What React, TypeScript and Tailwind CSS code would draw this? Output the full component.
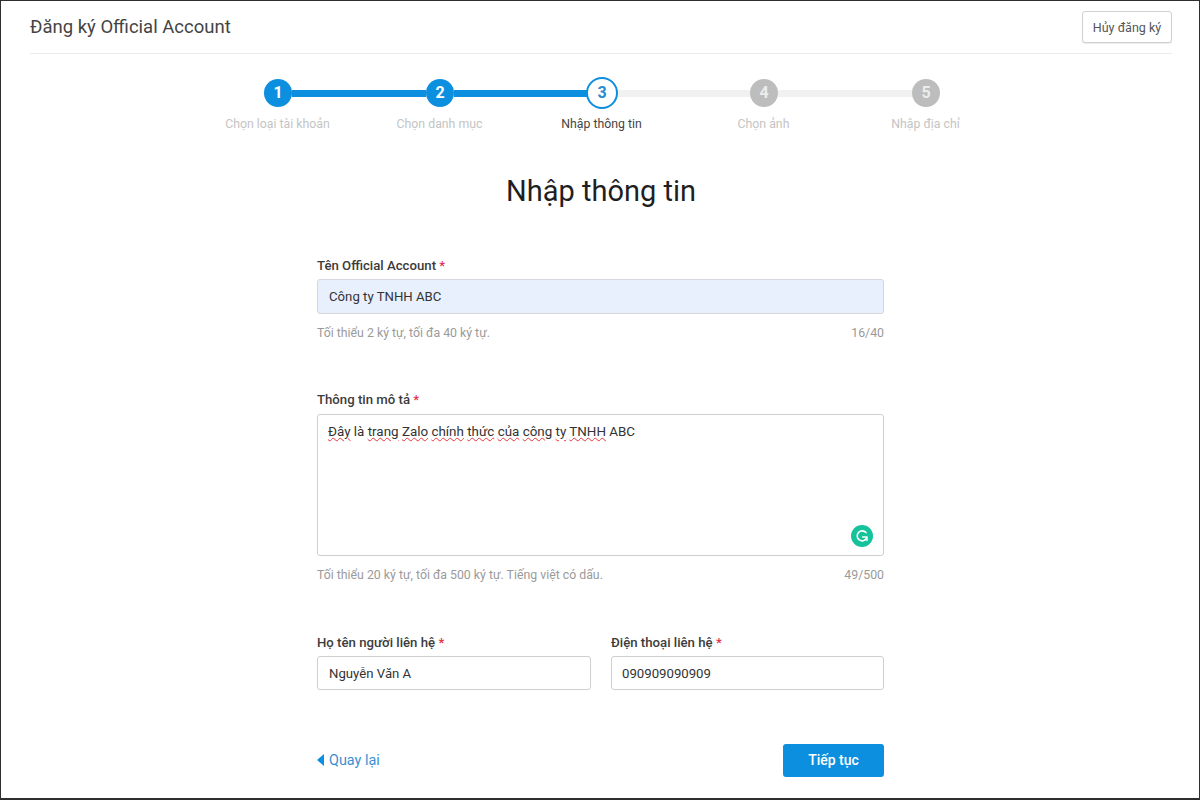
import React from 'react';

const steps = [
  { n: 1, label: 'Chọn loại tài khoản' },
  { n: 2, label: 'Chọn danh mục' },
  { n: 3, label: 'Nhập thông tin' },
  { n: 4, label: 'Chọn ảnh' },
  { n: 5, label: 'Nhập địa chỉ' },
];

function StepCircle({ n }: { n: number }) {
  if (n === 3) {
    return (
      <div className="z-10 -mx-0.5 flex h-8 w-8 shrink-0 items-center justify-center rounded-full border-2 border-[#0d8fe0] bg-white text-[16px] font-bold text-[#2a8ad0]">
        {n}
      </div>
    );
  }
  return (
    <div
      className={
        n < 3
          ? 'z-10 flex h-7 w-7 shrink-0 items-center justify-center rounded-full bg-[#0d8fe0] text-[16px] font-bold text-white'
          : 'z-10 flex h-7 w-7 shrink-0 items-center justify-center rounded-full bg-[#bdbdbd] text-[16px] font-bold text-[#ececec]'
      }
    >
      {n}
    </div>
  );
}

function Label({ text }: { text: string }) {
  return (
    <label className="block text-[13.2px] leading-[16px] font-medium text-[#3c3c3c]">
      {text} <span className="text-[#e0334c]">*</span>
    </label>
  );
}

function Squiggle({ children }: { children: React.ReactNode }) {
  return <span className="underline decoration-wavy decoration-[#e8353b] decoration-1">{children}</span>;
}

export default function App() {
  return (
    <div
      className="h-[800px] w-[1200px] overflow-hidden border border-b-2 border-[#2e2e2e] bg-white pr-[27px] pl-[29px] text-[#333]"
      style={{ fontFamily: 'Roboto, "Liberation Sans", sans-serif' }}
    >
      <header className="flex h-[53px] items-center justify-between border-b border-[#ebebeb]">
        <h1 className="text-[18.5px] leading-[24px] font-normal text-[#444]">Đăng ký Official Account</h1>
        <button className="h-[32px] w-[90px] rounded-[3px] border border-[#d0d0d0] bg-white pt-[2px] text-[12.5px] text-[#555] shadow-[0_1px_1px_rgba(0,0,0,0.08)]">
          Hủy đăng ký
        </button>
      </header>

      <div className="mt-[23px] flex h-8 items-center justify-center pl-[2px]">
        {steps.map((s, i) => (
          <React.Fragment key={s.n}>
            <StepCircle n={s.n} />
            {i < steps.length - 1 && (
              <div className={s.n < 3 ? 'h-[7px] w-[134px] bg-[#0d8fe0]' : 'h-[7px] w-[134px] bg-[#f1f1f1]'} />
            )}
          </React.Fragment>
        ))}
      </div>

      <div className="mt-[7px] flex justify-center pl-[1px]">
        {steps.map((s) => (
          <div
            key={s.n}
            className={
              s.n === 3
                ? 'w-[162px] text-center text-[12.3px] leading-[16px] text-[#444]'
                : 'w-[162px] text-center text-[12.3px] leading-[16px] text-[#c4c4c4]'
            }
          >
            {s.label}
          </div>
        ))}
      </div>

      <h2 className="mt-[39px] text-center text-[29px] leading-[40px] font-normal text-[#1f1f1f]">Nhập thông tin</h2>

      <form className="mt-[47px] ml-[287px] w-[567px]">
        <Label text="Tên Official Account" />
        <input
          readOnly
          value="Công ty TNHH ABC"
          className="mt-[5px] block h-[35px] w-full rounded-[3px] border border-[#d4d8de] bg-[#e8f0fe] px-[11px] text-[13.2px] text-[#333] outline-none"
        />
        <div className="mt-[11px] flex justify-between text-[12.3px] leading-[16px] text-[#9a9a9a]">
          <span>Tối thiểu 2 ký tự, tối đa 40 ký tự.</span>
          <span>16/40</span>
        </div>

        <div className="mt-[51px]">
          <Label text="Thông tin mô tả" />
        </div>
        <div className="relative mt-[6px] h-[142px] w-full rounded-[3px] border border-[#cfcfcf] px-[10px] py-[8px] text-[13.4px] leading-[18px] text-[#333]">
          <Squiggle>Đây</Squiggle> là <Squiggle>trang</Squiggle> <Squiggle>Zalo</Squiggle> <Squiggle>chính</Squiggle>{' '}
          <Squiggle>thức</Squiggle> <Squiggle>của</Squiggle> <Squiggle>công</Squiggle> <Squiggle>ty</Squiggle>{' '}
          <Squiggle>TNHH</Squiggle> ABC
          <div className="absolute right-[10px] bottom-[8px] flex h-[22px] w-[22px] items-center justify-center rounded-full bg-[#15c39a]">
            <svg width="14" height="14" viewBox="0 0 14 14" fill="none">
              <path d="M11.6 9.2A5 5 0 1 1 11 3.6" stroke="white" strokeWidth="1.6" strokeLinecap="round" />
              <path d="M7.6 8h4.4v3.6" stroke="white" strokeWidth="1.4" strokeLinecap="round" strokeLinejoin="round" />
            </svg>
          </div>
        </div>
        <div className="mt-[11px] flex justify-between text-[12.3px] leading-[16px] text-[#9a9a9a]">
          <span>Tối thiểu 20 ký tự, tối đa 500 ký tự. Tiếng việt có dấu.</span>
          <span>49/500</span>
        </div>

        <div className="mt-[52px] grid grid-cols-[274px_273px] gap-x-5">
          <div>
            <Label text="Họ tên người liên hệ" />
            <input
              readOnly
              value="Nguyễn Văn A"
              className="mt-[5px] block h-[34px] w-full rounded-[3px] border border-[#cfcfcf] px-[11px] text-[13.2px] text-[#333] outline-none"
            />
          </div>
          <div>
            <Label text="Điện thoại liên hệ" />
            <input
              readOnly
              value="090909090909"
              className="mt-[5px] block h-[34px] w-full rounded-[3px] border border-[#cfcfcf] px-[10px] text-[13.2px] text-[#333] outline-none"
            />
          </div>
        </div>

        <div className="mt-[54px] flex items-center justify-between">
          <a className="flex items-center gap-[5px] text-[14.4px] text-[#3b8fd0]">
            <svg width="7" height="12" viewBox="0 0 7 12">
              <path d="M7 0v12L0 6z" fill="#0d8fe0" />
            </svg>
            Quay lại
          </a>
          <button className="h-[33px] w-[101px] rounded-[3px] bg-[#0d8fe0] text-[14px] font-medium text-white">
            Tiếp tục
          </button>
        </div>
      </form>
    </div>
  );
}
